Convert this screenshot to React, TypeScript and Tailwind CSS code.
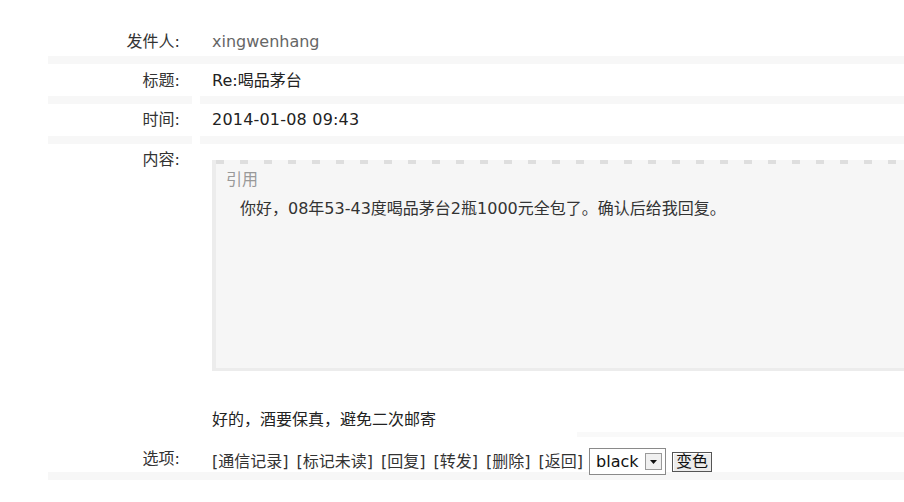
import React from "react";

const font = "font-['DejaVu_Sans','Noto_Sans_CJK_SC',sans-serif]";

const Band = ({ split = true }: { split?: boolean }) =>
  split ? (
    <div className="flex h-[8px] gap-[8px]">
      <div className="w-[144px] bg-[#f7f7f7]" />
      <div className="flex-1 bg-[#f7f7f7]" />
    </div>
  ) : (
    <div className="h-[8px] bg-[#f7f7f7]" />
  );

const Row = ({
  label,
  children,
  className,
}: {
  label: string;
  children: React.ReactNode;
  className: string;
}) => (
  <div className={`flex gap-[8px] leading-[20px] ${className}`}>
    <div className="w-[144px] pr-3 text-right text-[#333]">{label}</div>
    <div className="flex-1 pl-3">{children}</div>
  </div>
);

const links = ["通信记录", "标记未读", "回复", "转发", "删除", "返回"];

export default function App() {
  return (
    <div className={`h-[502px] w-[904px] overflow-hidden bg-white pl-[48px] text-[16px] ${font}`}>
      <Row label="发件人:" className="h-[56px] pt-[32px]">
        <span className="text-[#666]">xingwenhang</span>
      </Row>
      <Band split={false} />
      <Row label="标题:" className="h-[32px] pt-[7px]">
        <span className="text-[#222]">Re:喝品茅台</span>
      </Row>
      <Band />
      <Row label="时间:" className="h-[32px] pt-[6px]">
        <span className="tracking-[0.2px] text-[#222]">2014-01-08 09:43</span>
      </Row>
      <Band />

      {/* content */}
      <div className="flex gap-[8px] leading-[20px]">
        <div className="w-[144px] pr-3 pt-[6px] text-right text-[#333]">内容:</div>
        <div className="flex-1 pl-3 pt-4">
          <div className="h-[211px] border-b-[3px] border-l-[4px] border-[#ececec] bg-[#f6f6f6]">
            <div className="h-[4px] bg-[repeating-linear-gradient(90deg,#dedede_0_8px,transparent_8px_24px)]" />
            <div className="pl-[10px] pt-[6px] text-[#999]">引用</div>
            <div className="pl-[24px] pt-[9px] text-[#333]">
              你好，08年53-43度喝品茅台2瓶1000元全包了。确认后给我回复。
            </div>
          </div>
          <div className="mt-[39px] text-[#222]">好的，酒要保真，避免二次邮寄</div>
        </div>
      </div>
      <div className="mt-[2px] flex h-[5px]">
        <div className="w-[529px]" />
        <div className="flex-1 bg-[#f9f9f9]" />
      </div>

      <Row label="选项:" className="h-[35px] pt-[12px]">
        <div className="flex items-center text-[#333]">
          <div className="flex gap-[8px]">
            {links.map((l) => (
              <span key={l}>[{l}]</span>
            ))}
          </div>
          <div className="-mt-[1px] ml-[6px] flex h-[27px] w-[77px] items-center border border-[#8a8a8a] bg-white pl-[6px]">
            <span className="flex-1 text-[#111]">black</span>
            <span className="mr-[3px] flex h-[17px] w-[17px] items-center justify-center border border-[#9a9a9a] bg-[#f0f0f0]">
              <svg width="7" height="4" viewBox="0 0 7 4">
                <path d="M0 0h7L3.5 4z" fill="#111" />
              </svg>
            </span>
          </div>
          <button className="ml-[6px] flex h-[20px] items-center border border-[#555] bg-[#ececec] px-[3px] leading-[18px] text-[#111] shadow-[inset_1px_1px_0_#fff]">
            变色
          </button>
        </div>
      </Row>
      <Band split={false} />
    </div>
  );
}
